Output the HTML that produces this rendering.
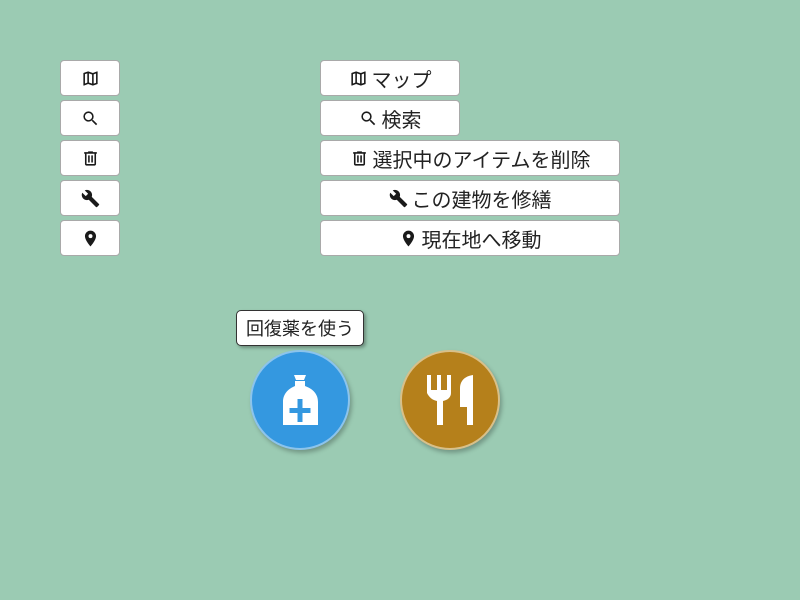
<!DOCTYPE html>
<html><head><meta charset="utf-8"><style>
body{margin:0;width:800px;height:600px;background:#9bcbb3;position:relative;overflow:hidden;font-family:"Liberation Sans","Noto Sans CJK JP",sans-serif;}
.b{position:absolute;height:36px;background:#fff;border:1px solid #a9a9a9;border-radius:4px;box-sizing:border-box;display:flex;align-items:center;justify-content:center;font-size:20px;color:#222;}
.b svg{width:19px;height:19px;fill:#1a1a1a;flex-shrink:0}
.b span{margin-left:4px}
.c{position:absolute;width:100px;height:100px;border-radius:50%;box-sizing:border-box;box-shadow:2px 3px 4px rgba(0,0,0,.25);}
.c svg{position:absolute;left:-2px;top:-2px;fill:#fff}
.t{position:absolute;left:236px;top:310px;width:128px;height:36px;box-sizing:border-box;background:#fff;border:1px solid #333;border-radius:5px;font-size:18px;color:#222;display:flex;align-items:center;justify-content:center;box-shadow:2px 2px 3px rgba(0,0,0,.3);}
</style></head><body>
<svg width="0" height="0" style="position:absolute"><defs>
<symbol id="map" viewBox="0 0 24 24"><path d="M20.5 3l-.16.03L15 5.1 9 3 3.36 4.9c-.21.07-.36.25-.36.48V20.5c0 .28.22.5.5.5l.16-.03L9 18.9l6 2.1 5.64-1.9c.21-.07.36-.25.36-.48V3.5c0-.28-.22-.5-.5-.5zM10 5.47l4 1.4v11.66l-4-1.4V5.47zm-5 .99l3-1.010v11.7l-3 1.16V6.46zm14 11.08l-3 1.01V6.86l3-1.16v11.840z"/></symbol>
<symbol id="search" viewBox="0 0 24 24"><path d="M15.5 14h-.79l-.28-.27A6.47 6.47 0 0016 9.5 6.5 6.5 0 109.5 16c1.61 0 3.09-.59 4.23-1.57l.27.28v.79l5 4.99L20.49 19l-4.99-5zm-6 0C7.01 14 5 11.99 5 9.5S7.01 5 9.5 5 14 7.01 14 9.5 11.99 14 9.5 14z"/></symbol>
<symbol id="del" viewBox="0 0 24 24"><path d="M15 4V3H9v1H4v2h1v13c0 1.1.9 2 2 2h10c1.1 0 2-.9 2-2V6h1V4h-5zm2 15H7V6h10v13zM9 8h2v9H9zm4 0h2v9h-2z"/></symbol>
<symbol id="wr" viewBox="0 0 24 24"><path d="M22.7 19l-9.1-9.1c.9-2.3.4-5-1.5-6.9-2-2-5-2.4-7.4-1.3L9 6 6 9 1.6 4.7C.4 7.1.9 10.1 2.9 12.1c1.9 1.9 4.6 2.4 6.9 1.5l9.1 9.1c.4.4 1 .4 1.4 0l2.3-2.3c.5-.4.5-1.100.1-1.4z"/></symbol>
<symbol id="pin" viewBox="0 0 24 24"><path d="M12 2C8.13 2 5 5.13 5 9c0 5.25 7 13 7 13s7-7.75 7-13c0-3.87-3.130-7-7-7zm0 9.5a2.5 2.5 0 010-5 2.5 2.5 0 010 5z"/></symbol>
</defs></svg>
<div class="b" style="left:60px;top:60px;width:60px"><svg><use href="#map"/></svg></div>
<div class="b" style="left:60px;top:100px;width:60px"><svg><use href="#search"/></svg></div>
<div class="b" style="left:60px;top:140px;width:60px"><svg><use href="#del"/></svg></div>
<div class="b" style="left:60px;top:180px;width:60px"><svg><use href="#wr"/></svg></div>
<div class="b" style="left:60px;top:220px;width:60px"><svg><use href="#pin"/></svg></div>
<div class="b" style="left:320px;top:60px;width:140px"><svg><use href="#map"/></svg><span>マップ</span></div>
<div class="b" style="left:320px;top:100px;width:140px"><svg><use href="#search"/></svg><span>検索</span></div>
<div class="b" style="left:320px;top:140px;width:300px"><svg><use href="#del"/></svg><span>選択中のアイテムを削除</span></div>
<div class="b" style="left:320px;top:180px;width:300px"><svg><use href="#wr"/></svg><span>この建物を修繕</span></div>
<div class="b" style="left:320px;top:220px;width:300px"><svg><use href="#pin"/></svg><span>現在地へ移動</span></div>
<div class="t">回復薬を使う</div>
<div class="c" style="left:250px;top:350px;background:#3498e0;border:2px solid #8cc4ec"><svg width="100" height="100" viewBox="0 0 100 100"><path d="M44 25h12l-2 5h-8z M45 31h10v5c8 3 13 8 13 16v23H33V52c0-8 5-13 12-16z"/><path d="M47.5 49h5v9h8v5h-8v9h-5v-9h-8v-5h8z" fill="#3498e0"/></svg></div>
<div class="c" style="left:400px;top:350px;background:#b5801b;border:2px solid #d8c08a"><svg width="100" height="100" viewBox="0 0 100 100"><path d="M27 25h4v15h6V25h4v15h6V25h4v18c0 4-3 7-8 8v24h-6V51c-5-1-8-4-10-8z"/><path d="M73 25v50h-6V57h-7V38c0-7 5-12 13-13z"/></svg></div>
</body></html>
